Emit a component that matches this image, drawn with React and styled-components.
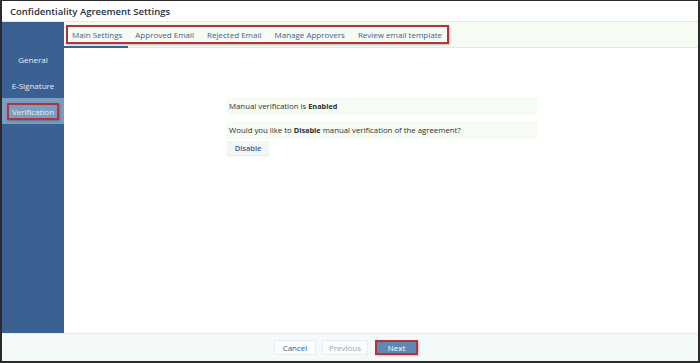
import React from 'react';
import styled, { createGlobalStyle } from 'styled-components';

const GlobalStyle = createGlobalStyle`
  html, body {
    margin: 0;
    padding: 0;
    background: #ffffff;
  }
  * {
    box-sizing: border-box;
  }
`;

const Frame = styled.div`
  width: 700px;
  height: 363px;
  border: 2px solid #2b2b2b;
  border-top-width: 1px;
  display: flex;
  flex-direction: column;
  font-family: 'Open Sans', 'Liberation Sans', sans-serif;
  background: #fff;
  overflow: hidden;
`;

const TitleBar = styled.div`
  height: 21px;
  padding-left: 8px;
  display: flex;
  align-items: center;
  font-size: 9.5px;
  font-weight: 600;
  color: #26303d;
  border-bottom: 1px solid #dfe6ee;
`;

const Body = styled.div`
  flex: 1;
  display: flex;
  min-height: 0;
`;

const Sidebar = styled.div`
  width: 62px;
  background: #3b6193;
  padding-top: 24px;
  display: flex;
  flex-direction: column;
`;

const SideItem = styled.div`
  height: 26px;
  display: flex;
  align-items: center;
  justify-content: center;
  font-size: 8px;
  color: #e8eef6;
  background: ${p => (p.active ? '#7a9cc2' : 'transparent')};
`;

const SideLabel = styled.span`
  padding: 1px 3px;
  border: 2px solid ${p => (p.boxed ? '#b0343a' : 'transparent')};
  box-shadow: ${p => (p.boxed ? '1px 1px 2px rgba(0,0,0,0.25)' : 'none')};
`;

const Main = styled.div`
  flex: 1;
  display: flex;
  flex-direction: column;
`;

const TabBar = styled.div`
  height: 26px;
  background: #f6fbf4;
  border-bottom: 1px solid #dfe8f0;
  position: relative;
  display: flex;
  align-items: center;
  padding-left: 2px;
`;

const TabGroup = styled.div`
  display: flex;
  align-items: center;
  height: 19px;
  border: 2px solid #b0343a;
  box-shadow: 1px 1px 2px rgba(0,0,0,0.25);
  padding: 0 5px 0 4px;
  gap: 13px;
`;

const Tab = styled.div`
  font-size: 8px;
  color: #3c5f8d;
  white-space: nowrap;
`;

const ActiveLine = styled.div`
  position: absolute;
  left: 0;
  bottom: -1px;
  width: 64px;
  height: 2px;
  background: #3b6193;
`;

const Content = styled.div`
  flex: 1;
  padding: 49px 0 0 162px;
  display: flex;
  flex-direction: column;
`;

const InfoRow = styled.div`
  width: 311px;
  height: 18px;
  line-height: 18px;
  background: #f6fbf4;
  padding-left: 3px;
  font-size: 7.8px;
  color: #2a2f36;
  white-space: nowrap;
  margin-bottom: ${p => p.gap || 0}px;
`;

const Strong = styled.span`
  font-weight: 700;
  font-size: 7.3px;
`;

const SmallButton = styled.button`
  width: 42px;
  height: 14px;
  margin-top: 2px;
  margin-left: 1px;
  border: none;
  background: #f3f5f7;
  box-shadow: 0 1px 1px rgba(0,0,0,0.08);
  font-family: inherit;
  font-size: 7.5px;
  color: #3c5f8d;
  font-weight: 600;
  padding: 0;
`;

const Footer = styled.div`
  height: 28px;
  background: #f4f9fa;
  border-top: 1px solid #e4eef0;
  display: flex;
  align-items: center;
  padding-left: 272px;
  gap: 6px;
`;

const FootButton = styled.button`
  height: 15px;
  width: ${p => p.w}px;
  padding: 0;
  font-family: inherit;
  font-size: 8px;
  border: ${p => (p.primary ? '2px solid #b0343a' : '1px solid #e6ecf0')};
  background: ${p => (p.primary ? '#5f87b4' : '#fbfcfd')};
  color: ${p => (p.primary ? '#ffffff' : p.muted ? '#9aa6b4' : '#3c5f8d')};
  box-shadow: ${p => (p.primary ? '1px 1px 2px rgba(0,0,0,0.25)' : 'none')};
  margin-left: ${p => p.ml || 0}px;
`;

const tabs = ['Main Settings', 'Approved Email', 'Rejected Email', 'Manage Approvers', 'Review email template'];

export default function App() {
  return (
    <>
      <GlobalStyle />
      <Frame>
        <TitleBar>Confidentiality Agreement Settings</TitleBar>
        <Body>
          <Sidebar>
            <SideItem>General</SideItem>
            <SideItem>E-Signature</SideItem>
            <SideItem active>
              <SideLabel boxed>Verification</SideLabel>
            </SideItem>
          </Sidebar>
          <Main>
            <TabBar>
              <TabGroup>
                {tabs.map(t => (
                  <Tab key={t}>{t}</Tab>
                ))}
              </TabGroup>
              <ActiveLine />
            </TabBar>
            <Content>
              <InfoRow gap={6}>
                Manual verification is <Strong>Enabled</Strong>
              </InfoRow>
              <InfoRow>
                Would you like to <Strong>Disable</Strong> manual verification of the agreement?
              </InfoRow>
              <SmallButton>Disable</SmallButton>
            </Content>
          </Main>
        </Body>
        <Footer>
          <FootButton w={42}>Cancel</FootButton>
          <FootButton w={46} muted>Previous</FootButton>
          <FootButton w={43} primary ml={1}>Next</FootButton>
        </Footer>
      </Frame>
    </>
  );
}
